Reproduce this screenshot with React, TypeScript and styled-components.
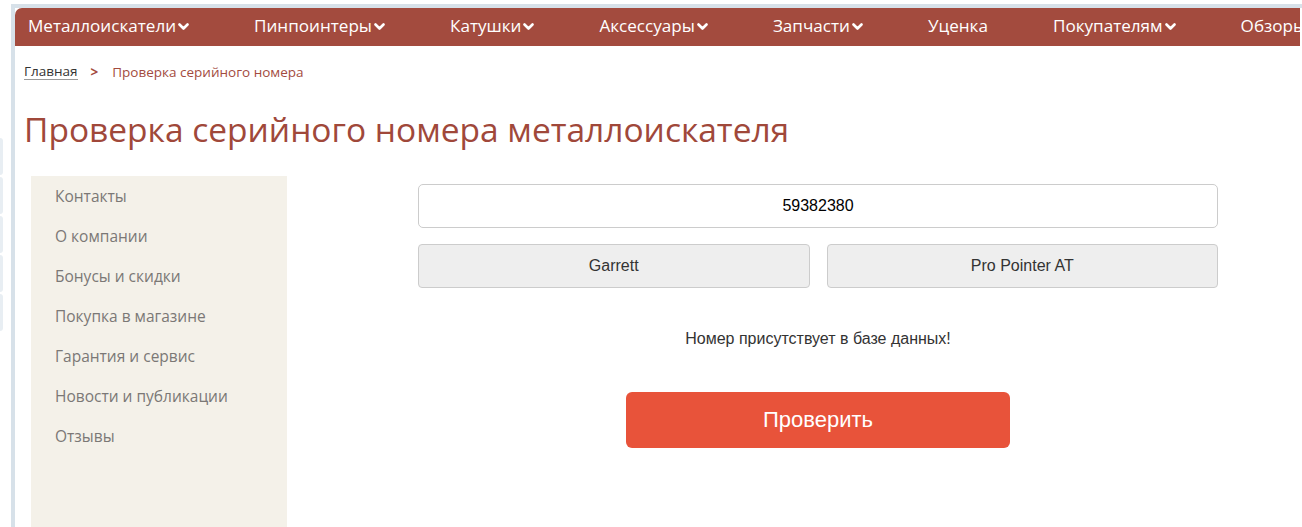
import React from "react";
import styled, { createGlobalStyle } from "styled-components";

const Global = createGlobalStyle`
  html, body { margin: 0; padding: 0; background: #ffffff; }
  body { font-family: "Open Sans", "Noto Sans", sans-serif; overflow: hidden; }
  * { box-sizing: border-box; }
`;

const Screen = styled.div`
  display: flex;
  width: 1302px;
  height: 527px;
  overflow: hidden;
  padding-top: 4px;
`;

const Gutter = styled.div`
  width: 11px;
  flex: none;
  display: flex;
  flex-direction: column;
  gap: 2px;
  padding-top: 134px;
`;

const GutterTab = styled.div`
  width: 3px;
  height: 37px;
  background: #e8eef3;
  border-radius: 0 3px 3px 0;
`;

const Frame = styled.div`
  flex: 1;
  border-top: 4px solid #d7e1e9;
  border-left: 4px solid #d7e1e9;
  background: #fff;
  display: flex;
  flex-direction: column;
  min-width: 0;
`;

const Nav = styled.nav`
  height: 38px;
  background: #a34b3e;
  border-top-left-radius: 7px;
  display: flex;
  align-items: center;
  gap: 65px;
  padding: 0 0 4px 13px;
  white-space: nowrap;
  overflow: hidden;
  margin-right: 2px;
`;

const NavItem = styled.a`
  display: flex;
  align-items: center;
  color: #ffffff;
  font-size: 17.1px;
  text-decoration: none;
  flex: none;
`;

const Chevron = styled.svg`
  width: 11px;
  height: 8px;
  margin-left: 2px;
  margin-top: 3px;
`;

const Crumbs = styled.div`
  display: flex;
  align-items: center;
  padding: 17px 0 0 9px;
  font-size: 13.5px;
  height: 34px;
`;

const CrumbLink = styled.a`
  color: #333;
  text-decoration: none;
  border-bottom: 1px solid #999;
  line-height: 15px;
`;

const CrumbSep = styled.span`
  color: #a34b3e;
  font-weight: 700;
  margin: 0 14px 0 13px;
`;

const CrumbCurrent = styled.span`
  color: #a34b3e;
`;

const Title = styled.h1`
  margin: 0;
  padding: 29px 0 0 9px;
  height: 100px;
  font-weight: 400;
  font-size: 33.5px;
  color: #a0483a;
  line-height: 40px;
  white-space: nowrap;
`;

const Body = styled.div`
  display: flex;
  flex: 1;
  padding-left: 16px;
  margin-top: -4px;
`;

const Sidebar = styled.ul`
  width: 256px;
  flex: none;
  background: #f4f1e9;
  margin: 0;
  padding: 8px 0 0 24px;
  list-style: none;
`;

const SideItem = styled.li`
  height: 40px;
  line-height: 24px;
  font-size: 15.5px;
  color: #7b7876;
  white-space: nowrap;
`;

const Content = styled.div`
  margin-left: 131px;
  width: 800px;
  padding-top: 8px;
  display: flex;
  flex-direction: column;
  align-items: center;
  font-family: "Liberation Sans", Arial, sans-serif;
`;

const SerialInput = styled.input`
  width: 100%;
  height: 44px;
  border: 1px solid #cccccc;
  border-radius: 5px;
  text-align: center;
  font-family: "Liberation Sans", Arial, sans-serif;
  font-size: 16px;
  color: #000;
  outline: none;
`;

const SelectRow = styled.div`
  width: 100%;
  display: grid;
  grid-template-columns: 1fr 1fr;
  gap: 17px;
  margin-top: 16px;
`;

const SelectBox = styled.div`
  height: 44px;
  background: #eeeeee;
  border: 1px solid #cccccc;
  border-radius: 4px;
  display: flex;
  align-items: center;
  justify-content: center;
  font-size: 16px;
  color: #333;
`;

const Message = styled.div`
  margin-top: 41px;
  font-size: 16px;
  color: #333;
  line-height: 20px;
`;

const CheckButton = styled.button`
  margin-top: 43px;
  width: 384px;
  height: 56px;
  border: none;
  border-radius: 6px;
  background: #e8533a;
  color: #fff;
  font-family: "Liberation Sans", Arial, sans-serif;
  font-size: 22px;
`;

const navItems: { label: string; drop: boolean }[] = [
  { label: "Металлоискатели", drop: true },
  { label: "Пинпоинтеры", drop: true },
  { label: "Катушки", drop: true },
  { label: "Аксессуары", drop: true },
  { label: "Запчасти", drop: true },
  { label: "Уценка", drop: false },
  { label: "Покупателям", drop: true },
  { label: "Обзоры", drop: false },
];

const sideItems = [
  "Контакты",
  "О компании",
  "Бонусы и скидки",
  "Покупка в магазине",
  "Гарантия и сервис",
  "Новости и публикации",
  "Отзывы",
];

export default function App() {
  return (
    <>
      <Global />
      <Screen>
        <Gutter>
          {[0, 1, 2, 3, 4].map((i) => (
            <GutterTab key={i} />
          ))}
        </Gutter>
        <Frame>
          <Nav>
            {navItems.map((n) => (
              <NavItem key={n.label} href="#">
                {n.label}
                {n.drop && (
                  <Chevron viewBox="0 0 11 8">
                    <polyline points="1.5,1.5 5.5,5.5 9.5,1.5" fill="none" stroke="#fff" strokeWidth="2.6" strokeLinecap="round" strokeLinejoin="round" />
                  </Chevron>
                )}
              </NavItem>
            ))}
          </Nav>
          <Crumbs>
            <CrumbLink href="#">Главная</CrumbLink>
            <CrumbSep>&gt;</CrumbSep>
            <CrumbCurrent>Проверка серийного номера</CrumbCurrent>
          </Crumbs>
          <Title>Проверка серийного номера металлоискателя</Title>
          <Body>
            <Sidebar>
              {sideItems.map((s) => (
                <SideItem key={s}>{s}</SideItem>
              ))}
            </Sidebar>
            <Content>
              <SerialInput defaultValue="59382380" />
              <SelectRow>
                <SelectBox>Garrett</SelectBox>
                <SelectBox>Pro Pointer AT</SelectBox>
              </SelectRow>
              <Message>Номер присутствует в базе данных!</Message>
              <CheckButton>Проверить</CheckButton>
            </Content>
          </Body>
        </Frame>
      </Screen>
    </>
  );
}
